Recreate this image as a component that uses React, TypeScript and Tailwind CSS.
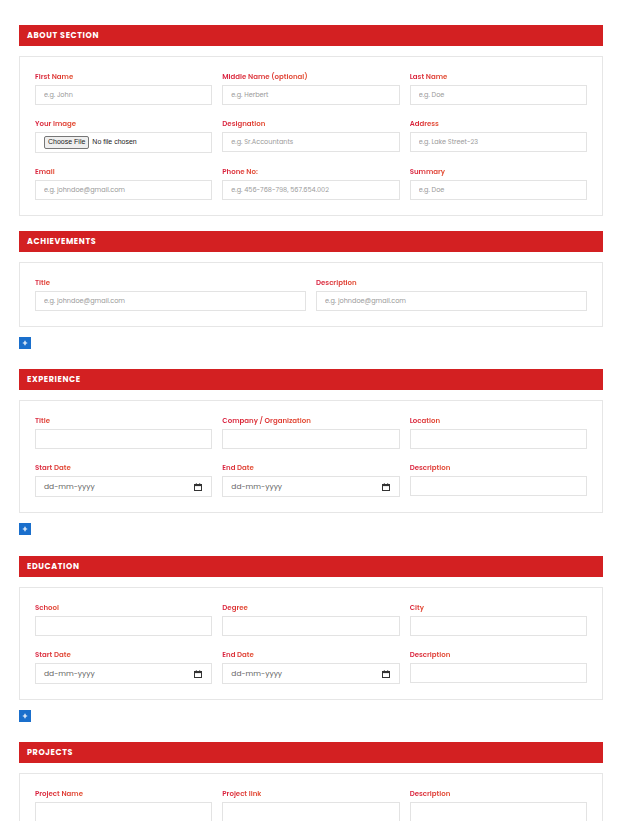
import React from "react";

type Field = {
  label: string;
  placeholder?: string;
  kind?: "text" | "file" | "date";
};

// Label text has a soft red -> orange gradient
const Label = ({ text }: { text: string }) => (
  <label className="block text-[7px] leading-[10px] mb-[3px] font-semibold">
    <span className="bg-gradient-to-r from-[#d81b3c] to-[#e2482a] bg-clip-text text-transparent">
      {text}
    </span>
  </label>
);

const CalendarIcon = () => (
  <svg width="8" height="8" viewBox="0 0 8 8" className="shrink-0">
    <rect x="0.5" y="1.5" width="7" height="6" fill="none" stroke="#333" strokeWidth="1" />
    <rect x="0.5" y="1.5" width="7" height="1.6" fill="#333" />
    <rect x="1.8" y="0.3" width="1" height="1.5" fill="#333" />
    <rect x="5.2" y="0.3" width="1" height="1.5" fill="#333" />
  </svg>
);

const FieldInput = ({ field }: { field: Field }) => {
  if (field.kind === "file") {
    return (
      <div className="h-[21px] border border-[#e3e3e3] flex items-center pl-[8px]">
        <input
          type="file"
          className="text-[7px] text-[#222] font-['Liberation_Sans',sans-serif] file:text-[7px] file:border file:border-[#767676] file:bg-[#efefef] file:rounded-[2px] file:px-[3px] file:py-0 file:mr-[3px] file:text-[#222]"
        />
      </div>
    );
  }
  if (field.kind === "date") {
    return (
      <div className="h-[21px] border border-[#e3e3e3] flex items-center justify-between pl-[8px] pr-[9px]">
        <span className="text-[7.5px] text-[#666]">dd-mm-yyyy</span>
        <CalendarIcon />
      </div>
    );
  }
  return (
    <input
      type="text"
      placeholder={field.placeholder}
      className="block w-full h-[20px] border border-[#e3e3e3] pl-[8px] text-[6.5px] placeholder:text-[#9a9a9a] outline-none"
    />
  );
};

const Section = ({
  title,
  cols,
  fields,
  plus,
}: {
  title: string;
  cols: 2 | 3;
  fields: Field[];
  plus?: boolean;
}) => (
  <section>
    <div className="h-[21px] bg-[#d32022] flex items-center pl-[8px]">
      <h2 className="text-white text-[8px] font-bold tracking-[0.6px] uppercase">{title}</h2>
    </div>
    <div className="mt-[10px] border border-[#e6e6e6] px-[15px] pt-[15px] pb-[15px]">
      <div
        className={
          cols === 3
            ? "grid grid-cols-3 gap-x-[10px] gap-y-[14px]"
            : "grid grid-cols-2 gap-x-[10px] gap-y-[14px]"
        }
      >
        {fields.map((f) => (
          <div key={f.label}>
            <Label text={f.label} />
            <FieldInput field={f} />
          </div>
        ))}
      </div>
    </div>
    {plus && (
      <button className="mt-[10px] w-[12px] h-[12px] bg-[#1a6fcc] flex items-center justify-center">
        <svg width="6" height="6" viewBox="0 0 6 6">
          <path d="M3 0.8v4.4M0.8 3h4.4" stroke="#fff" strokeWidth="1.2" />
        </svg>
      </button>
    )}
  </section>
);

const about: Field[] = [
  { label: "First Name", placeholder: "e.g. John" },
  { label: "Middle Name (optional)", placeholder: "e.g. Herbert" },
  { label: "Last Name", placeholder: "e.g. Doe" },
  { label: "Your Image", kind: "file" },
  { label: "Designation", placeholder: "e.g. Sr.Accountants" },
  { label: "Address", placeholder: "e.g. Lake Street-23" },
  { label: "Email", placeholder: "e.g. johndoe@gmail.com" },
  { label: "Phone No:", placeholder: "e.g. 456-768-798, 567.654.002" },
  { label: "Summary", placeholder: "e.g. Doe" },
];

const achievements: Field[] = [
  { label: "Title", placeholder: "e.g. johndoe@gmail.com" },
  { label: "Description", placeholder: "e.g. johndoe@gmail.com" },
];

const experience: Field[] = [
  { label: "Title" },
  { label: "Company / Organization" },
  { label: "Location" },
  { label: "Start Date", kind: "date" },
  { label: "End Date", kind: "date" },
  { label: "Description" },
];

const education: Field[] = [
  { label: "School" },
  { label: "Degree" },
  { label: "City" },
  { label: "Start Date", kind: "date" },
  { label: "End Date", kind: "date" },
  { label: "Description" },
];

const projects: Field[] = [
  { label: "Project Name" },
  { label: "Project link" },
  { label: "Description" },
];

export default function App() {
  return (
    <div className="min-h-screen bg-white font-['Poppins','Open_Sans',sans-serif] pt-[25px] pl-[19px] pr-[24px] pb-[30px]">
      <div className="flex flex-col">
        <Section title="About Section" cols={3} fields={about} />
        <div className="mt-[15px]">
          <Section title="Achievements" cols={2} fields={achievements} plus />
        </div>
        <div className="mt-[20px]">
          <Section title="Experience" cols={3} fields={experience} plus />
        </div>
        <div className="mt-[21px]">
          <Section title="Education" cols={3} fields={education} plus />
        </div>
        <div className="mt-[20px]">
          <Section title="Projects" cols={3} fields={projects} />
        </div>
      </div>
    </div>
  );
}
